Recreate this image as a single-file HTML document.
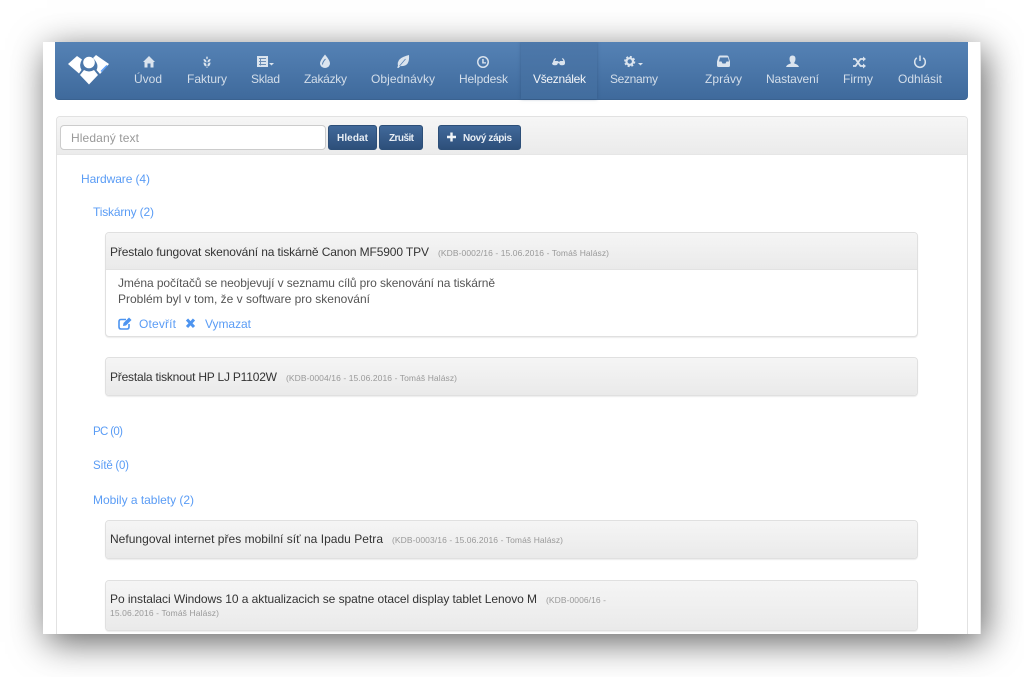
<!DOCTYPE html>
<html><head><meta charset="utf-8"><style>
html,body{margin:0;padding:0;width:1024px;height:677px;overflow:hidden;background:#fff}
.a{position:absolute;box-sizing:border-box}
#shadow{left:43px;top:42px;width:938px;height:592px;background:#fff;box-shadow:4px 8px 34px rgba(0,0,0,.62)}
#win{left:43px;top:42px;width:938px;height:592px;overflow:hidden;background:#fff;border-right:1px solid #e8e8e8}
#nav{left:12px;top:0;width:913px;height:58px;background:linear-gradient(#5582b5,#3f6a9c);border-radius:0 0 4px 4px;border-bottom:1px solid #3a6290}
#act{left:478px;top:0;width:76px;height:57px;background:linear-gradient(#4d78aa,#426d9e);box-shadow:0 0 3px rgba(40,70,110,.5)}
#panel{left:13px;top:74px;width:912px;height:530px;border:1px solid #e2e2e2;border-radius:4px;background:#fff}
#phead{left:14px;top:75px;width:910px;height:38px;background:linear-gradient(#f6f6f6,#ebebeb);border-radius:3px 3px 0 0;border-bottom:1px solid #e6e6e6}
#inp{left:17px;top:83px;width:266px;height:25px;border:1px solid #ccc;border-radius:4px;background:#fff}
.b{top:83px;height:25px;border-radius:3px;background:linear-gradient(#41699a,#2d4f7a);border:1px solid #2d4f78}
.c{left:62px;width:813px;border:1px solid #e0e0e0;border-radius:4px;background:#fff;box-shadow:0 1px 1px rgba(0,0,0,.08)}
.h{left:63px;width:811px;background:linear-gradient(#f5f5f5,#eaeaea);border-radius:3px}
svg{position:absolute;left:0;top:0}
text{font-family:"Liberation Sans",sans-serif}
.n{font-size:12px;fill:#d3deea}
.t{font-size:12px;fill:#333}
.m{font-size:8.5px;fill:#999}
.l{font-size:12px;fill:#5a9cf5}
.p{font-size:12px;fill:#555}
.w{font-size:10px;fill:#e8eef5;font-weight:bold}
</style></head><body>
<div class="a" id="shadow"></div>
<div class="a" id="win">
<div class="a" id="nav"></div>
<div class="a" id="act"></div>
<div class="a" id="panel"></div>
<div class="a" id="phead"></div>
<div class="a" id="inp"></div>
<div class="a b" style="left:285px;width:49px"></div>
<div class="a b" style="left:336px;width:44px"></div>
<div class="a b" style="left:395px;width:83px"></div>
<div class="a c" style="top:190px;height:105px"></div>
<div class="a h" style="top:191px;height:37px;border-radius:3px 3px 0 0;border-bottom:1px solid #e2e2e2"></div>
<div class="a c" style="top:315px;height:39px"></div>
<div class="a h" style="top:316px;height:37px"></div>
<div class="a c" style="top:478px;height:39px"></div>
<div class="a h" style="top:479px;height:37px"></div>
<div class="a c" style="top:538px;height:51px"></div>
<div class="a h" style="top:539px;height:49px"></div>
</div>

<svg width="1024" height="677" viewBox="0 0 1024 677">
<!-- logo -->
<g fill="#fff">
<path d="M68 64 L77 56 L82 59.500 Q78.500 65 81.500 70 L79 73.500 Z"/>
<circle cx="89" cy="62.500" r="5.800"/>
<path d="M80 75 L84 70 Q89 73 94 70 L98 75 L89 84.500 Z"/>
<path d="M96 55 L109 64 L100 74 L96.500 70 Q99.500 64.500 93 58 Z"/>
</g>
<path d="M101 71.500 L107 65.500" stroke="#5a9cf5" stroke-width="1.500"/>
<!-- nav icons -->
<g fill="#dbe4ee">
<path d="M143 62 L149 56 L155 62 L153.500 62 L153.500 67.500 L150.500 67.500 L150.500 63.500 L147.500 63.500 L147.500 67.500 L144.500 67.500 L144.500 62 Z"/>
<path d="M207 56 l1 2 l-1 1.500 l-1-1.500 Z M203.500 59 q2.500 0 3 2.500 v1 q-3 -.5 -3 -3.500 Z M210.500 59 q-2.500 0 -3 2.500 v1 q3 -.5 3 -3.500 Z M203.500 62.500 q2.500 0 3 2.500 v3 h1 v-3 q.5 -2.500 3 -2.500 q0 3.500 -3 4 l-.5 1 l-.5-1 q-3 -.5 -3 -4 Z"/>
<path d="M257 56 h11 v11 h-11 Z"/>
<path d="M269 63 h5 l-2.500 2.500 Z"/>
<path d="M325 54.500 q5 6 5 9 a5 4.500 0 0 1 -10 0 q0 -3 5 -9 Z"/>
<path d="M398 66 Q396 58 409 55 Q410 67 400.500 66 L398.500 68 L397 67.500 Z"/>
<path d="M553 62 q.5 -3 2.500 -4 l.5 1 q-1 .5 -1.300 2 h2.800 q.8 0 1 .8 h1 q.2 -.8 1 -.8 h2.800 q-.3 -1.500 -1.300 -2 l.5 -1 q2 1 2.500 4 v1.500 q-.5 1.800 -2.500 1.800 h-1 q-2 0 -2.300 -2 h-1.400 q-.3 2 -2.300 2 h-1 q-2 0 -2.500 -1.800 Z"/>
<path d="M638 63 h5 l-2.500 2.500 Z"/>
<path d="M720 55.500 h7 q1 0 1.500 1 l1.500 5 v4 q0 1.500 -1.500 1.500 h-10 q-1.500 0 -1.500 -1.500 v-4 l1.500 -5 q.5 -1 1.500 -1 Z M720 57.500 l-1 4 h2.500 l1 2 h3 l1 -2 h2.500 l-1 -4 Z" fill-rule="evenodd"/>
<path d="M792.500 55.500 q3 0 3 3.500 q0 2 -1.200 3.500 v1 q4 1 4.700 3.500 h-13 q.7 -2.500 4.700 -3.500 v-1 q-1.200 -1.500 -1.200 -3.500 q0 -3.500 3 -3.500 Z"/>
<path d="M483 56 a6 6 0 1 0 .01 0 Z M483 57.500 a4.500 4.500 0 1 1 -.01 0 Z M482.200 59 h1.500 v3.200 h2.300 v1.300 h-3.800 Z" fill-rule="evenodd"/>
</g>
<g fill="none" stroke="#dbe4ee">
<circle cx="629.700" cy="61.500" r="3.300" stroke-width="2.200"/>
<circle cx="629.700" cy="61.500" r="4.800" stroke-width="1.600" stroke-dasharray="2 1.770"/>
</g>
<path d="M325.500 59 q-3 3 -3 5.500" stroke="#5580b3" stroke-width="1" fill="none"/>
<path d="M399.500 66 L405.500 59" stroke="#5580b3" stroke-width=".8"/>
<path d="M259 58.500 h7 M259 61.500 h7 M259 64.500 h7 M260.500 58 v7.500" stroke="#6b8db5" stroke-width="1" fill="none"/>
<g fill="none" stroke="#dbe4ee">
<path d="M853 59 h2.500 l5 7 h2.500 M853 66 h2.500 l5 -7 h2.500" stroke-width="1.800"/>
<path d="M923.200 57.800 a5.300 5.300 0 1 1 -6.400 0" stroke-width="1.500"/>
<path d="M920 55.500 v5.500" stroke-width="1.500"/>
</g>
<path d="M863 56.500 l3 2.500 l-3 2.500 Z M863 63.500 l3 2.500 l-3 2.500 Z" fill="#dbe4ee"/>
<!-- nav text -->
<text class="n" x="134" y="83" textLength="28">Úvod</text>
<text class="n" x="187" y="83" textLength="40">Faktury</text>
<text class="n" x="251" y="83" textLength="29">Sklad</text>
<text class="n" x="304" y="83" textLength="43">Zakázky</text>
<text class="n" x="371" y="83" textLength="64">Objednávky</text>
<text class="n" x="459" y="83" textLength="49">Helpdesk</text>
<text class="n" x="533" y="83" textLength="53" style="fill:#f2f5f9">Všeználek</text>
<text class="n" x="610" y="83" textLength="48">Seznamy</text>
<text class="n" x="705" y="83" textLength="37">Zprávy</text>
<text class="n" x="766" y="83" textLength="53">Nastavení</text>
<text class="n" x="843" y="83" textLength="30">Firmy</text>
<text class="n" x="898" y="83" textLength="44">Odhlásit</text>
<!-- toolbar -->
<text x="71" y="142" font-size="12" fill="#999" textLength="68">Hledaný text</text>
<text class="w" x="337" y="141" textLength="31">Hledat</text>
<text class="w" x="389" y="141" textLength="25">Zrušit</text>
<path d="M447 137 h9 M451.500 132.500 v9" stroke="#f0f4f8" stroke-width="2.400"/>
<text class="w" x="463" y="141" textLength="49">Nový zápis</text>
<!-- tree -->
<text class="l" x="81" y="183" textLength="69">Hardware (4)</text>
<text class="l" x="93" y="216" textLength="61">Tiskárny (2)</text>
<text class="t" x="110" y="256" textLength="319">Přestalo fungovat skenování na tiskárně Canon MF5900 TPV</text>
<text class="m" x="438" y="256" textLength="171">(KDB-0002/16 - 15.06.2016 - Tomáš Halász)</text>
<text class="p" x="118" y="287" textLength="377">Jména počítačů se neobjevují v seznamu cílů pro skenování na tiskárně</text>
<text class="p" x="118" y="303" textLength="252">Problém byl v tom, že v software pro skenování</text>
<path d="M126 319.500 h-5 q-2 0 -2 2 v5.500 q0 2 2 2 h6 q2 0 2 -2 v-3" fill="none" stroke="#4d94f0" stroke-width="1.600"/>
<path d="M123 326 l.5 -3 l5.500 -5.500 l2.500 2.500 l-5.500 5.500 Z" fill="#4d94f0"/>
<path d="M187 319.500 l7 7.500 M194 319.500 l-7 7.500" stroke="#4d94f0" stroke-width="3"/>
<text class="l" x="139" y="328" textLength="37">Otevřít</text>
<text class="l" x="205" y="328" textLength="46">Vymazat</text>
<text class="t" x="110" y="381" textLength="167">Přestala tisknout HP LJ P1102W</text>
<text class="m" x="286" y="381" textLength="171">(KDB-0004/16 - 15.06.2016 - Tomáš Halász)</text>
<text class="l" x="93" y="435" style="font-size:11.500px" textLength="30">PC (0)</text>
<text class="l" x="93" y="469" style="font-size:11.500px" textLength="36">Sítě (0)</text>
<text class="l" x="93" y="504" textLength="101">Mobily a tablety (2)</text>
<text class="t" x="110" y="543" textLength="273">Nefungoval internet přes mobilní síť na Ipadu Petra</text>
<text class="m" x="392" y="543" textLength="171">(KDB-0003/16 - 15.06.2016 - Tomáš Halász)</text>
<text class="t" x="110" y="603" textLength="427">Po instalaci Windows 10 a aktualizacich se spatne otacel display tablet Lenovo M</text>
<text class="m" x="546" y="603" textLength="60">(KDB-0006/16 -</text>
<text class="m" x="110" y="616" textLength="109">15.06.2016 - Tomáš Halász)</text>
</svg>
</body></html>
